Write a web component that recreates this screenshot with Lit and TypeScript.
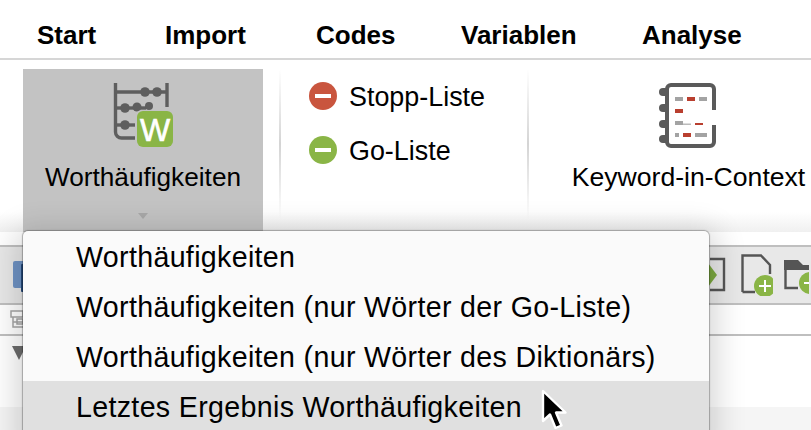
import { LitElement, html, css, svg } from "lit";
import { customElement } from "lit/decorators.js";

const abacus = svg`<svg class="abacus" width="64" height="70" viewBox="0 0 64 70">
  <g fill="none" stroke="#5e5e5e" stroke-width="3.4">
    <path d="M3.5 3V52a6 6 0 0 0 6 6H24"/><path d="M55 3V27"/><path d="M3.5 12H55"/>
    <path d="M3.5 28H34"/><path d="M3.5 45H24"/>
  </g>
  <g fill="#5e5e5e">
    <circle cx="33" cy="12" r="4.8"/><circle cx="45" cy="12" r="4.8"/>
    <circle cx="13" cy="28" r="4.8"/><circle cx="25" cy="27" r="4.5"/><circle cx="37" cy="26" r="4"/>
    <circle cx="13" cy="45" r="4.8"/>
  </g>
  <rect x="23" y="30" width="38" height="38" rx="7" fill="#c3c3c3"/>
  <rect x="25" y="31" width="36" height="36" rx="6" fill="#8ab546"/>
  <text x="43" y="60.5" text-anchor="middle" class="w">W</text>
</svg>`;

const notebook = svg`<svg width="60" height="66" viewBox="0 0 60 66">
  <g fill="#5a5a5a">
    <rect x="1" y="5" width="12" height="8" rx="4"/><rect x="1" y="21" width="12" height="8" rx="4"/>
    <rect x="1" y="37" width="12" height="8" rx="4"/><rect x="1" y="52" width="12" height="8" rx="4"/>
  </g>
  <path d="M56 27V6a4 4 0 0 0-4-4H13a4 4 0 0 0-4 4V59a4 4 0 0 0 4 4H52a4 4 0 0 0 4-4V42" fill="#fff" stroke="#5a5a5a" stroke-width="4"/>
  <g fill="#a3a3a3">
    <rect x="17" y="14" width="8" height="4"/><rect x="41" y="14" width="8" height="4"/>
    <rect x="17" y="38" width="8" height="4"/><rect x="25" y="40.5" width="8" height="1.5" fill="#bbb"/>
    <rect x="17" y="50" width="4" height="4"/><rect x="37" y="50" width="12" height="4"/>
  </g>
  <g fill="#b93f2f">
    <rect x="29" y="14" width="8" height="4"/><rect x="17" y="26" width="8" height="4"/>
    <rect x="37" y="40" width="8" height="2"/><rect x="25" y="50" width="8" height="4"/>
  </g>
</svg>`;

const minus = (color: string) => svg`<svg width="28" height="28" viewBox="0 0 28 28">
  <circle cx="14" cy="14" r="14" fill=${color}/><rect x="6" y="12" width="16" height="4" fill="#fff"/>
</svg>`;

@customElement("app-root")
export class AppRoot extends LitElement {
  static styles = css`
    :host {
      display: block;
      position: relative;
      width: 811px;
      height: 430px;
      overflow: hidden;
      background: #fff;
      font-family: "Liberation Sans", Arial, sans-serif;
      color: #000;
    }
    .tabs {
      display: grid;
      grid-template-columns: 128px 151px 145px 181px auto;
      height: 38px;
      padding: 20px 0 0 37px;
      border-bottom: 2px solid #d6d6d6;
      font-size: 26px;
      font-weight: 700;
      line-height: 30px;
    }
    .ribbon {
      display: flex;
      height: 172px;
      padding: 9px 0 0 23px;
      box-sizing: border-box;
      background: linear-gradient(#fff 0, #fff 152px, #f0f0f0 172px);
    }
    .big {
      width: 240px;
      height: 163px;
      background: #c3c3c3;
      display: flex;
      flex-direction: column;
      align-items: center;
      font-size: 26.2px;
      line-height: 30px;
      flex: none;
    }
    .abacus { margin: 11px 0 0 2px; display: block; flex: none; }
    .w { font: 400 32px "Liberation Sans", Arial, sans-serif; fill: #fff; stroke: #fff; stroke-width: 0.6px; }
    .big-label { margin-top: 12px; }
    .caret {
      margin-top: 21px;
      width: 0;
      height: 0;
      border: 5.5px solid transparent;
      border-top: 6px solid #a8a8a8;
      border-bottom: 0;
    }
    .sep {
      width: 2px;
      height: 150px;
      margin-left: 16px;
      flex: none;
      background: linear-gradient(rgba(0,0,0,0), #d4d4d4 50%, rgba(0,0,0,0));
    }
    .sep.flush { margin-left: 0; }
    .lists {
      width: 246px;
      flex: none;
      padding: 13px 0 0 28px;
      box-sizing: border-box;
      display: flex;
      flex-direction: column;
      gap: 26px;
      font-size: 26.9px;
      line-height: 28px;
    }
    .list-row { display: flex; align-items: center; gap: 12px; }
    .list-row svg { display: block; }
    .list-row span { position: relative; top: 1px; }
    .kwic {
      width: 314px;
      flex: none;
      display: flex;
      flex-direction: column;
      align-items: center;
      font-size: 26.6px;
      line-height: 30px;
      padding-top: 14px;
    }
    .kwic svg { display: block; margin-left: 3px; }
    .kwic span { margin-top: 13px; margin-left: 5px; white-space: nowrap; }
    .gapbar { height: 13px; background: #fff; }
    .toolbar {
      height: 60px;
      box-sizing: border-box;
      background: #e8e8e8;
      border-top: 2px solid #bfbfbf;
      border-bottom: 2px solid #bfbfbf;
      display: flex;
      align-items: center;
      justify-content: space-between;
      padding: 0 0 0 13px;
    }
    .toolbar svg { display: block; }
    .tools { display: flex; align-items: center; gap: 11px; margin-right: 2px; }
    .tree {
      height: 29px;
      border-bottom: 2px solid #bfbfbf;
      padding: 0 0 0 10px;
      display: flex;
      align-items: center;
    }
    .tree svg { display: block; }
    .tri {
      margin: 10px 0 0 12px;
      width: 0;
      height: 0;
      border-left: 7px solid transparent;
      border-right: 7px solid transparent;
      border-top: 14px solid #6b6b6b;
    }
    .foot {
      position: absolute;
      left: 0;
      right: 0;
      bottom: 0;
      height: 23px;
      background: #f5f5f5;
    }
    .menu {
      position: absolute;
      left: 23px;
      top: 231px;
      width: 686px;
      height: 220px;
      background: #fafafa;
      border-radius: 5px;
      box-shadow: 0 0 1px 1px rgba(0,0,0,0.28), 0 6px 30px 8px rgba(0,0,0,0.16);
      font-size: 28.6px;
      letter-spacing: 0.33px;
    }
    .item {
      height: 50px;
      line-height: 52px;
      padding-left: 53px;
      white-space: nowrap;
    }
    .item.on { background: #e0e0e0; height: 70px; }
    .cursor { position: absolute; left: 538px; top: 388px; display: block; }
  `;

  render() {
    return html`
      <div class="tabs">
        <span>Start</span><span>Import</span><span>Codes</span><span>Variablen</span><span>Analyse</span>
      </div>
      <div class="ribbon">
        <div class="big">
          ${abacus}
          <span class="big-label">Worthäufigkeiten</span>
          <span class="caret"></span>
        </div>
        <div class="sep"></div>
        <div class="lists">
          <div class="list-row">${minus("#c9553e")}<span>Stopp-Liste</span></div>
          <div class="list-row">${minus("#8ab546")}<span>Go-Liste</span></div>
        </div>
        <div class="sep flush"></div>
        <div class="kwic">
          ${notebook}
          <span>Keyword-in-Context</span>
        </div>
      </div>
      <div class="gapbar"></div>
      <div class="toolbar">
        <svg width="14" height="33" viewBox="0 0 14 33">
          <rect x="0" y="2" width="12" height="27" rx="2" fill="#6f93c4"/>
          <rect x="8" y="5" width="5" height="28" rx="1" fill="#254a7c"/>
        </svg>
        <div class="tools">
          <svg width="22" height="36" viewBox="0 0 22 36">
            <path d="M2 2H16V33H2" fill="none" stroke="#555" stroke-width="2.4"/>
            <path d="M0 6L9 18L0 30Z" fill="#7ba83f"/>
          </svg>
          <svg width="32" height="42" viewBox="0 0 32 42">
            <path d="M1.5 38V1.5H20L29 11V20M1.5 38H14" fill="none" stroke="#555" stroke-width="2.4"/>
            <circle cx="24" cy="32" r="11" fill="#8ab546"/>
            <path d="M24 26V38M18 32H30" stroke="#fff" stroke-width="2"/>
          </svg>
          <svg width="25" height="38" viewBox="0 0 25 38">
            <path d="M0 4H14L19 9H25V14H0Z" fill="#555"/>
            <path d="M1.5 10V32H14" fill="none" stroke="#555" stroke-width="2.4"/>
            <circle cx="26" cy="27" r="11" fill="#8ab546"/>
            <path d="M20 27H25" stroke="#fff" stroke-width="2"/>
          </svg>
        </div>
      </div>
      <div class="tree">
        <svg width="14" height="20" viewBox="0 0 14 20" fill="none" stroke="#a5a5a5" stroke-width="1.5">
          <rect x="1" y="1" width="12" height="6"/><path d="M3 7V17H13M3 12H13"/><rect x="7" y="9" width="6" height="5"/>
        </svg>
      </div>
      <div class="tri"></div>
      <div class="foot"></div>
      <div class="menu">
        <div class="item">Worthäufigkeiten</div>
        <div class="item">Worthäufigkeiten (nur Wörter der Go-Liste)</div>
        <div class="item">Worthäufigkeiten (nur Wörter des Diktionärs)</div>
        <div class="item on">Letztes Ergebnis Worthäufigkeiten</div>
      </div>
      <svg class="cursor" width="32" height="44" viewBox="0 0 32 44">
        <path d="M5 3V33L12 26.5L17.5 40L23.5 37.5L18 24.5H27.5Z" fill="#000" stroke="#fff" stroke-width="2.4" stroke-linejoin="round"/>
      </svg>
    `;
  }
}
